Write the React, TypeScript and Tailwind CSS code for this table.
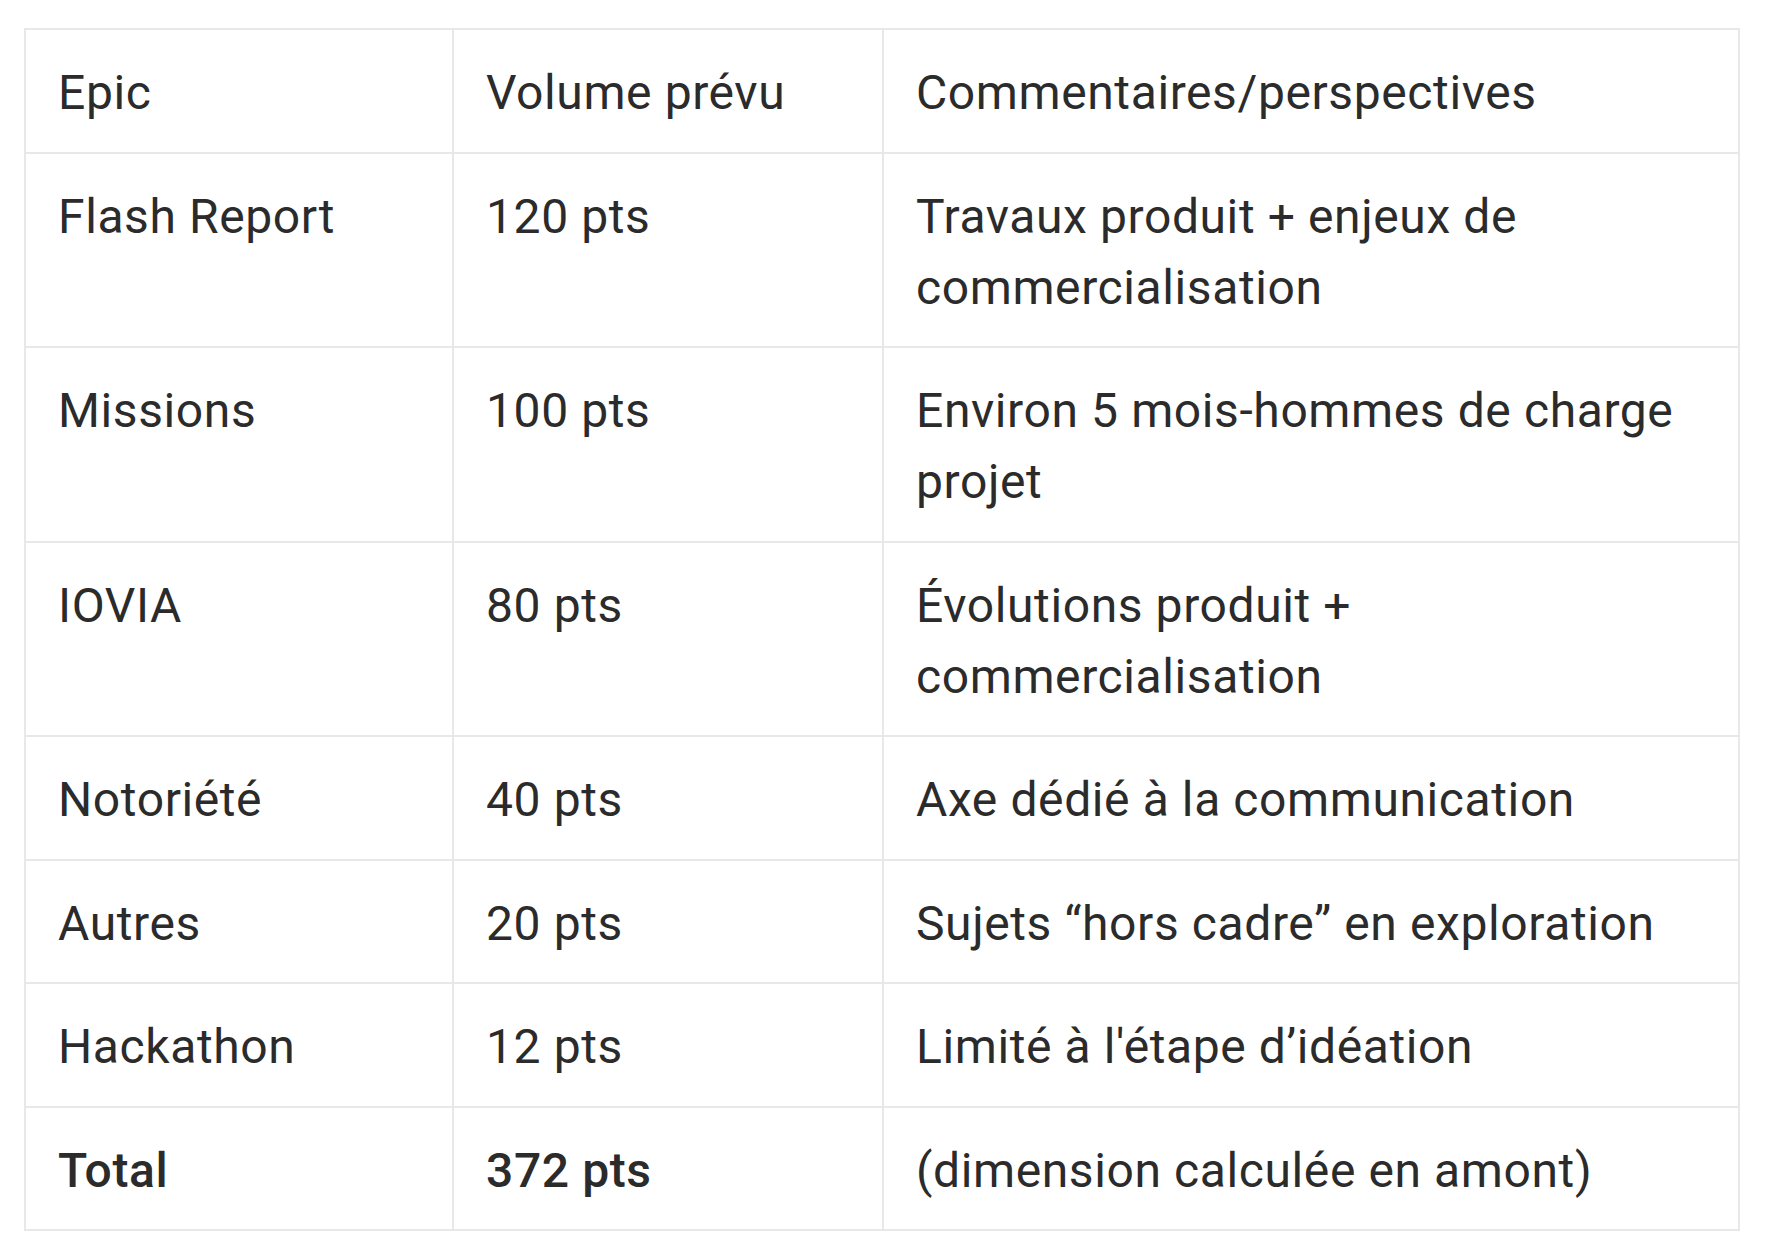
import React from 'react';

const rows = [
  { epic: 'Flash Report', volume: '120 pts', comment: 'Travaux produit + enjeux de commercialisation' },
  { epic: 'Missions', volume: '100 pts', comment: 'Environ 5 mois-hommes de charge projet' },
  { epic: 'IOVIA', volume: '80 pts', comment: 'Évolutions produit + commercialisation' },
  { epic: 'Notoriété', volume: '40 pts', comment: 'Axe dédié à la communication' },
  { epic: 'Autres', volume: '20 pts', comment: 'Sujets “hors cadre” en exploration' },
  { epic: 'Hackathon', volume: '12 pts', comment: "Limité à l'étape d’idéation" },
];

const cell = 'border-2 border-[#e8e8e8] px-[32px] pt-[27px] pb-[23.5px] align-top';

const App: React.FC = () => {
  return (
    <div className="min-h-screen bg-white pt-[28px] pl-[24px] font-['Roboto',sans-serif] text-[48px] leading-[71px] tracking-[0.6px] text-[#2b2b2b]">
      <table className="table-fixed border-collapse w-[1716px]">
        <colgroup>
          <col className="w-[428px]" />
          <col className="w-[430px]" />
          <col />
        </colgroup>
        <thead>
          <tr>
            <th className={`${cell} text-left font-normal`}>Epic</th>
            <th className={`${cell} text-left font-normal`}>Volume prévu</th>
            <th className={`${cell} text-left font-normal`}>Commentaires/perspectives</th>
          </tr>
        </thead>
        <tbody>
          {rows.map((r, i) => (
            <tr key={i}>
              <td className={cell}>{r.epic}</td>
              <td className={cell}>{r.volume}</td>
              <td className={cell}>{r.comment}</td>
            </tr>
          ))}
          <tr>
            <td className={`${cell} font-medium`}>Total</td>
            <td className={`${cell} font-medium`}>372 pts</td>
            <td className={cell}>(dimension calculée en amont)</td>
          </tr>
        </tbody>
      </table>
    </div>
  );
};

export default App;
